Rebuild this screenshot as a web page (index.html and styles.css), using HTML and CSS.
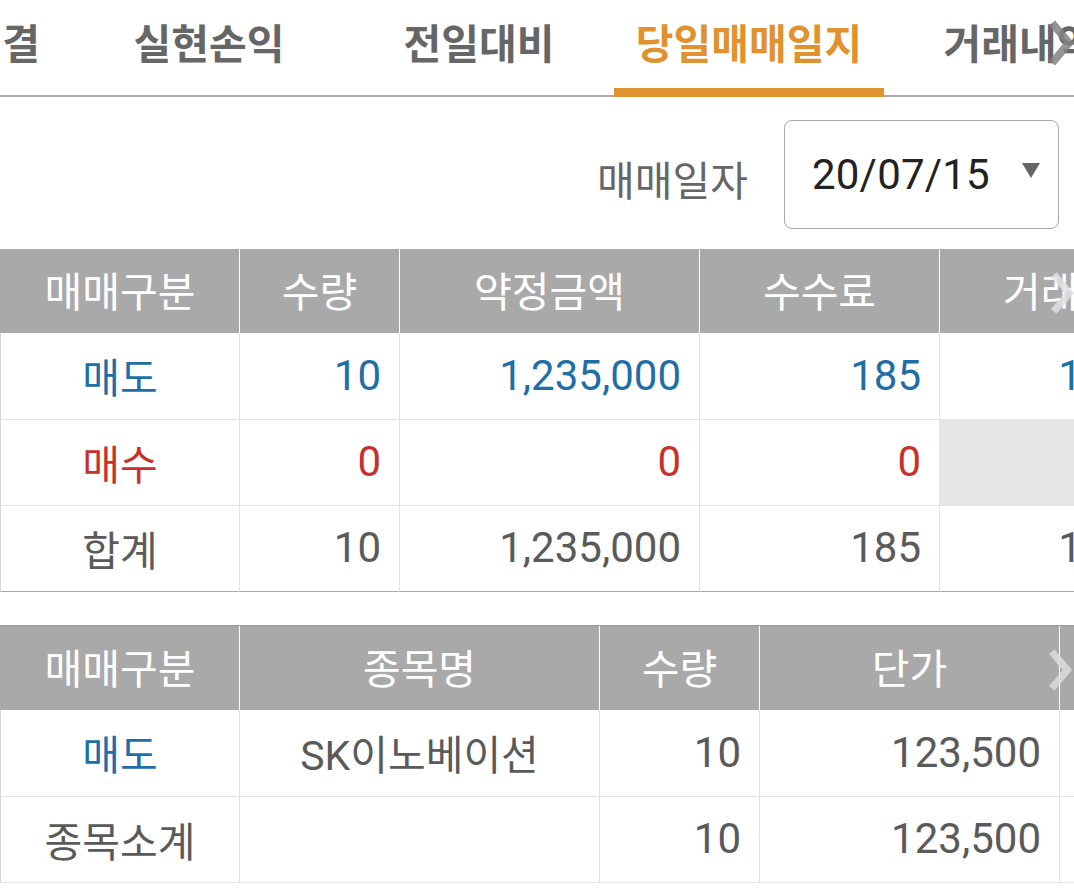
FILE: index.html
```html
<!DOCTYPE html>
<html lang="ko">
<head>
<meta charset="utf-8">
<title>당일매매일지</title>
<link rel="stylesheet" href="styles.css">
</head>
<body>
<div class="page">
  <nav class="tabbar">
    <div class="tabs">
      <div class="tab tab-first">미체결</div>
      <div class="tab">실현손익</div>
      <div class="tab">전일대비</div>
      <div class="tab active">당일매매일지</div>
      <div class="tab">거래내역</div>
    </div>
    <svg class="chev chev-tab" viewBox="0 0 26 48" width="26" height="48"><path d="M4 4 L21 24 L4 44" fill="none" stroke="currentColor" stroke-width="8" stroke-linecap="butt" stroke-linejoin="miter"/></svg>
  </nav>

  <section class="daterow">
    <span class="date-label">매매일자</span>
    <div class="select">
      <span class="select-value">20/07/15</span>
      <span class="caret"></span>
    </div>
  </section>

  <section class="scroller">
    <div class="grid grid1">
      <div class="h">매매구분</div>
      <div class="h">수량</div>
      <div class="h">약정금액</div>
      <div class="h">수수료</div>
      <div class="h">거래세</div>

      <div class="c lab sell">매도</div>
      <div class="c num sell">10</div>
      <div class="c num sell">1,235,000</div>
      <div class="c num sell">185</div>
      <div class="c num sell">1,600</div>

      <div class="c lab buy">매수</div>
      <div class="c num buy">0</div>
      <div class="c num buy">0</div>
      <div class="c num buy">0</div>
      <div class="c num blank"></div>

      <div class="c lab last">합계</div>
      <div class="c num last">10</div>
      <div class="c num last">1,235,000</div>
      <div class="c num last">185</div>
      <div class="c num last">1,600</div>
    </div>
    <svg class="chev chev-h1" viewBox="0 0 26 48" width="24" height="44"><path d="M4 4 L21 24 L4 44" fill="none" stroke="currentColor" stroke-width="8"/></svg>
  </section>

  <section class="scroller second">
    <div class="grid grid2">
      <div class="h">매매구분</div>
      <div class="h">종목명</div>
      <div class="h">수량</div>
      <div class="h">단가</div>
      <div class="h">약정금액</div>

      <div class="c lab sell">매도</div>
      <div class="c ctr">SK이노베이션</div>
      <div class="c num">10</div>
      <div class="c num">123,500</div>
      <div class="c num">1,235,000</div>

      <div class="c lab">종목소계</div>
      <div class="c ctr"></div>
      <div class="c num">10</div>
      <div class="c num">123,500</div>
      <div class="c num">1,235,000</div>
    </div>
    <svg class="chev chev-h2" viewBox="0 0 26 48" width="26" height="44"><path d="M4 4 L21 24 L4 44" fill="none" stroke="currentColor" stroke-width="8"/></svg>
  </section>
</div>
</body>
</html>
```

FILE: styles.css
```css
* { box-sizing: border-box; }
html, body { margin: 0; padding: 0; background: #fff; }
body {
  font-family: Roboto, "Noto Sans CJK KR", sans-serif;
  color: #555;
  width: 1074px;
  overflow: hidden;
}
.page { width: 1074px; overflow: hidden; }

/* Tabs */
.tabbar {
  position: relative;
  height: 97px;
  border-bottom: 2px solid #aaaaaa;
}
.tabs {
  display: flex;
  margin-left: -196px;
  height: 95px;
}
.tab {
  flex: 0 0 270px;
  height: 95px;
  display: flex;
  align-items: center;
  justify-content: center;
  padding-bottom: 14px;
  font-size: 41px;
  font-weight: 700;
  color: #666;
  white-space: nowrap;
  position: relative;
}
.tab-first {
  justify-content: flex-end;
  padding-right: 34px;
}
.tab.active { color: #e0922f; }
.tab.active::after {
  content: "";
  position: absolute;
  left: 0;
  right: 0;
  bottom: -2px;
  height: 9px;
  background: #e0922f;
}
.chev { position: absolute; display: block; }
.chev-tab { right: 0; top: 19px; color: rgba(130,130,130,0.85); }

/* Date row */
.daterow {
  height: 152px;
  display: flex;
  justify-content: flex-end;
  align-items: center;
  gap: 36px;
  padding: 3px 15px 0 0;
}
.date-label {
  font-size: 41px;
  color: #666;
  padding-top: 6px;
}
.select {
  width: 275px;
  height: 109px;
  border: 1px solid #a8a8a8;
  border-radius: 8px;
  display: flex;
  align-items: center;
  justify-content: space-between;
  padding: 0 18px 0 27px;
}
.select-value {
  font-size: 42px;
  color: #222;
  letter-spacing: 0.2px;
}
.caret {
  width: 0;
  height: 0;
  border-left: 9px solid transparent;
  border-right: 9px solid transparent;
  border-top: 15px solid #666;
  margin-top: -8px;
}

/* Tables */
.scroller { position: relative; overflow: hidden; }
.second { margin-top: 33px; }
.grid { display: grid; }
.grid1 { grid-template-columns: 240px 160px 300px 240px 240px; grid-template-rows: 84px 87px 86px 86px; width: 1180px; }
.grid2 { grid-template-columns: 240px 360px 160px 300px 240px; grid-template-rows: 84px 87px 86px; width: 1300px; border-top: 1px solid #9c9c9c; }

.h {
  background: #a9a9a9;
  color: #fff;
  font-size: 41px;
  display: flex;
  align-items: center;
  justify-content: center;
  border-right: 1px solid #fff;
  padding-bottom: 4px;
  white-space: nowrap;
}
.h:first-child { border-left: 1px solid #a9a9a9; }
.c {
  display: flex;
  align-items: center;
  border-right: 1px solid #e3e3e3;
  border-bottom: 1px solid #e3e3e3;
  font-size: 41px;
  color: #5a5a5a;
  white-space: nowrap;
  padding-bottom: 2px;
}
.lab { justify-content: center; border-left: 1px solid #d6d6d6; font-size: 41px; }
.num { justify-content: flex-end; padding-right: 18px; font-size: 42px; }
.ctr { justify-content: center; font-size: 41px; }
.sell { color: #1f6ea6; }
.buy { color: #c7302c; }
.blank { background: #e6e6e6; }
.last { border-bottom-color: #a8a8a8; }

.chev-h1 { right: 0; top: 22px; color: rgba(225,225,225,0.85); }
.chev-h2 { right: 1px; top: 23px; color: rgba(220,220,220,0.85); }
```
